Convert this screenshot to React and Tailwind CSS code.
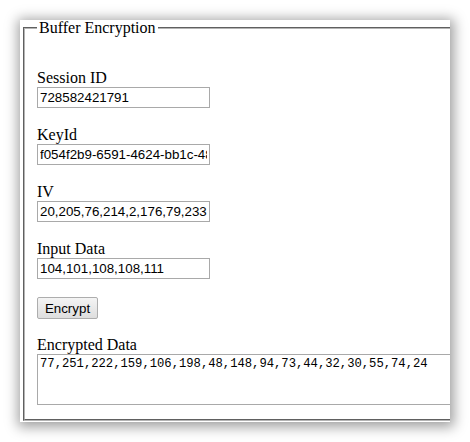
import React from "react";

function Field({ label, value, first }) {
  return (
    <div className={first ? "mt-[32px]" : "mt-[18px]"}>
      <div className="h-[18px] leading-[18px] text-[16px]">{label}</div>
      <input
        type="text"
        readOnly
        value={value}
        className="block h-[21px] w-[173px] border border-[#a9a9a9] bg-white px-[2px] font-['Liberation_Sans',Arial,sans-serif] text-[13.33px] leading-[15px] text-black outline-none"
      />
    </div>
  );
}

export default function App() {
  return (
    <div className="h-[442px] w-[470px] overflow-hidden bg-white pl-[20px] pt-[20px] font-['Liberation_Serif','Times_New_Roman',serif] text-black">
      <div className="h-[402px] w-[430px] overflow-hidden bg-white shadow-[1px_2px_12px_3px_rgba(0,0,0,0.38)]">
        {/* the form box runs past the right edge, as in the capture */}
        <fieldset className="-mt-px ml-[3px] w-[470px] border-2 border-[#b4b4b4] px-[12px] pb-[14px] [border-style:groove]">
          <legend className="px-[2px] text-[16px] leading-[18px]">Buffer Encryption</legend>
          <div className="flex flex-col">
            <Field first label="Session ID" value="728582421791" />
            <Field label="KeyId" value="f054f2b9-6591-4624-bb1c-48d2e7a90c13" />
            <Field label="IV" value="20,205,76,214,2,176,79,233,118,41,7,152,60,201,88,19" />
            <Field label="Input Data" value="104,101,108,108,111" />

            <div className="mt-[18px]">
              <button
                type="button"
                className="block h-[22px] w-[61px] rounded-[2px] border border-[#adadad] bg-gradient-to-b from-[#f4f4f4] to-[#dedede] font-['Liberation_Sans',Arial,sans-serif] text-[13.33px] leading-[15px] text-black"
              >
                Encrypt
              </button>
            </div>

            <div className="mt-[17px] h-[18px] text-[16px] leading-[18px]">Encrypted Data</div>
            <textarea
              readOnly
              value="77,251,222,159,106,198,48,148,94,73,44,32,30,55,74,24"
              className="block h-[51px] w-[440px] resize-none border border-[#a9a9a9] bg-white px-[2px] py-[2px] font-['Liberation_Mono','Courier_New',monospace] text-[12.2px] leading-[15px] text-black outline-none"
            />
          </div>
        </fieldset>
      </div>
    </div>
  );
}
